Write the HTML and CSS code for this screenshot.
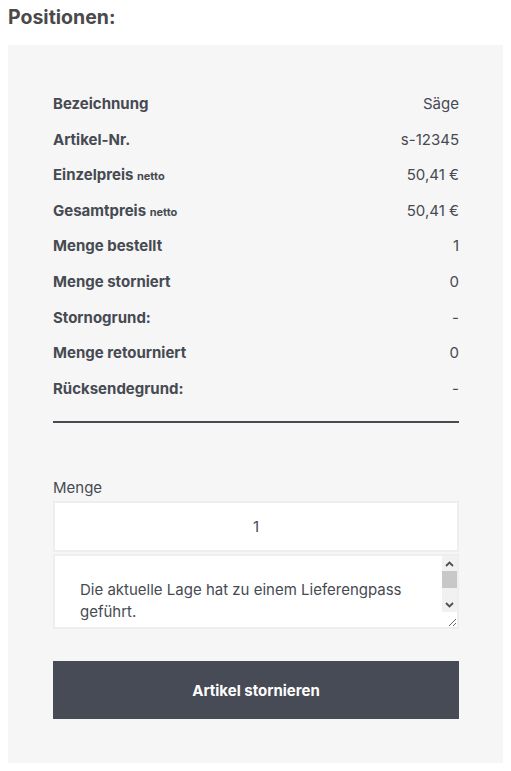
FILE: index.html
```html
<!DOCTYPE html>
<html lang="de">
<head>
    <meta charset="UTF-8">
    <meta name="viewport" content="width=device-width, initial-scale=1.0">
    <title>Positionen</title>
    <link rel="stylesheet" href="styles.css">
</head>
<body>
<h2 class="section-title">Positionen:</h2>

<div class="position-card">
    <div class="details">
        <div class="detail-row">
            <span class="detail-label">Bezeichnung</span>
            <span class="detail-value">Säge</span>
        </div>
        <div class="detail-row">
            <span class="detail-label">Artikel-Nr.</span>
            <span class="detail-value">s-12345</span>
        </div>
        <div class="detail-row">
            <span class="detail-label">Einzelpreis <small>netto</small></span>
            <span class="detail-value">50,41 €</span>
        </div>
        <div class="detail-row">
            <span class="detail-label">Gesamtpreis <small>netto</small></span>
            <span class="detail-value">50,41 €</span>
        </div>
        <div class="detail-row">
            <span class="detail-label">Menge bestellt</span>
            <span class="detail-value">1</span>
        </div>
        <div class="detail-row">
            <span class="detail-label">Menge storniert</span>
            <span class="detail-value">0</span>
        </div>
        <div class="detail-row">
            <span class="detail-label">Stornogrund:</span>
            <span class="detail-value">-</span>
        </div>
        <div class="detail-row">
            <span class="detail-label">Menge retourniert</span>
            <span class="detail-value">0</span>
        </div>
        <div class="detail-row">
            <span class="detail-label">Rücksendegrund:</span>
            <span class="detail-value">-</span>
        </div>
    </div>

    <!-- Stornierung -->
    <div class="cancel-form">
        <label for="quantity">Menge</label>
        <input type="text" id="quantity" value="1">
        <div class="textarea-wrap">
            <textarea id="reason">Die aktuelle Lage hat zu einem Lieferengpass geführt.</textarea>
            <!-- scrollbar as drawn by the browser -->
            <div class="fake-scrollbar">
                <span class="sb-btn">
                    <svg width="9" height="6" viewBox="0 0 9 6"><path d="M1 5 L4.5 1.5 L8 5" fill="none" stroke="#505050" stroke-width="1.8"/></svg>
                </span>
                <span class="sb-track"><span class="sb-thumb"></span></span>
                <span class="sb-btn">
                    <svg width="9" height="6" viewBox="0 0 9 6"><path d="M1 1 L4.5 4.5 L8 1" fill="none" stroke="#505050" stroke-width="1.8"/></svg>
                </span>
            </div>
        </div>
        <button class="btn-cancel">Artikel stornieren</button>
    </div>
</div>
</body>
</html>
```

FILE: styles.css
```css
body {
    font-family: "Inter", "DejaVu Sans", sans-serif;
    color: #464a52;
    margin: 8px;
}
.section-title {
    font-size: 19.5px;
    font-weight: 700;
    line-height: 18px;
    margin: 0 0 19px 0;
    color: #4a4a4a;
}
.position-card {
    background-color: #f6f6f6;
    width: 496px;
    box-sizing: border-box;
    padding: 41px 45px 44px 45px;
}
.details {
    border-bottom: 2px solid #464a52;
    padding-bottom: 15px;
}
.detail-row {
    display: flex;
    justify-content: space-between;
    align-items: baseline;
    height: 35.6px;
    line-height: 35.6px;
    font-size: 15px;
}
.detail-label {
    font-weight: 700;
}
.detail-label small {
    font-size: 11px;
}
.cancel-form {
    display: flex;
    flex-direction: column;
    padding-top: 55px;
}
.cancel-form label {
    font-size: 15px;
    line-height: 20px;
    margin-bottom: 3px;
}
.cancel-form input[type="text"] {
    height: 51px;
    box-sizing: border-box;
    border: 2px solid #eeeeee;
    background: #fff;
    text-align: center;
    font-family: inherit;
    font-size: 15px;
    color: #464a52;
    outline: none;
}
.textarea-wrap {
    position: relative;
    margin-top: 2px;
    display: flex;
}
.cancel-form textarea {
    flex: 1;
    height: 75px;
    box-sizing: border-box;
    border: 2px solid #eeeeee;
    background: #fff;
    padding: 23px 40px 25px 25px;
    font-family: inherit;
    font-size: 15px;
    line-height: 22px;
    color: #464a52;
    outline: none;
    resize: vertical;
    overflow: hidden;
}
.fake-scrollbar {
    position: absolute;
    top: 2px;
    right: 2px;
    bottom: 17px;
    width: 15px;
    display: flex;
    flex-direction: column;
    background: #f1f1f1;
}
.sb-btn {
    height: 15px;
    display: flex;
    align-items: center;
    justify-content: center;
}
.sb-track {
    flex: 1;
}
.sb-thumb {
    display: block;
    height: 17px;
    background: #c8c8c8;
}
.btn-cancel {
    margin-top: 32px;
    height: 58px;
    border: none;
    background-color: #464b55;
    color: white;
    font-family: inherit;
    font-weight: 700;
    font-size: 15px;
    cursor: pointer;
}
```
